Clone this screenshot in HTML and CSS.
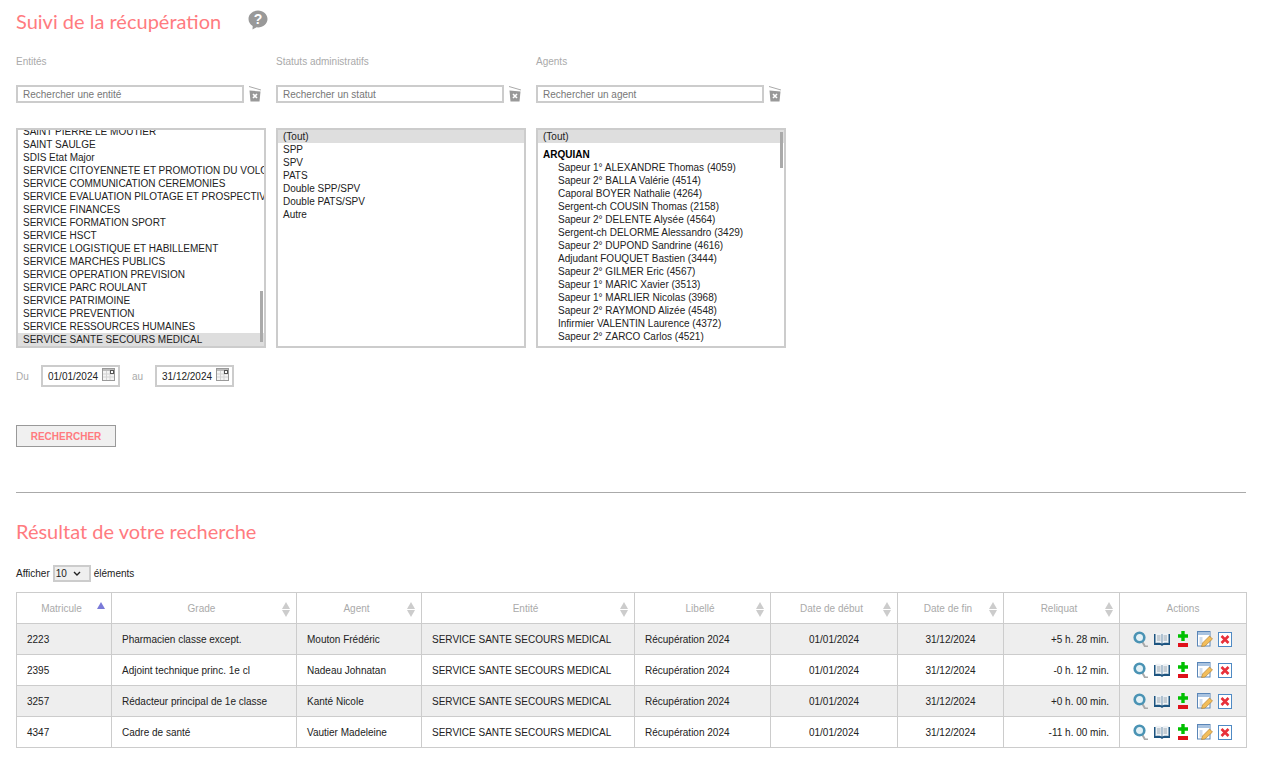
FILE: index.html
```html
<!DOCTYPE html>
<html lang="fr">
<head>
    <meta charset="UTF-8">
    <title>Suivi de la récupération</title>
    <link rel="stylesheet" href="styles.css">
</head>
<body>
    <svg class="sprites" width="0" height="0">
        <symbol id="i-trash" viewBox="0 0 14 18">
            <path d="M1 1.500 13 5" stroke="#aaa" stroke-width="1" fill="none"/>
            <path d="M1.500 5.500 12.500 6.500 11.500 16.500H2.500Z" fill="#999"/>
            <path d="M5 9 9 13M9 9 5 13" stroke="#fff" stroke-width="1.600"/>
        </symbol>
        <symbol id="i-cal" viewBox="0 0 13 13">
            <rect x=".5" y=".5" width="12" height="12" fill="#f4f4f4" stroke="#999"/>
            <rect x="1" y="1" width="11" height="2" fill="#bbb"/>
            <path d="M1 6H12M1 9H12M4.500 3V12M8 3V12" stroke="#d4d4d4"/>
            <rect x="8.500" y="2.500" width="3" height="3" fill="#fff" stroke="#555"/>
        </symbol>
        <symbol id="i-search" viewBox="0 0 16 16">
            <path d="M9.500 11 12 15.500H15" stroke="#aaa" stroke-width="2" fill="none"/>
            <circle cx="6.500" cy="6.500" r="4.800" fill="#e4f1f6" stroke="#4a93b4" stroke-width="2.600"/>
        </symbol>
        <symbol id="i-book" viewBox="0 0 16 14">
            <path d="M0 2H16V13H9.500L8 14 6.500 13H0Z" fill="#1d5480"/>
            <path d="M1.500 1C4 .5 6.500 .5 7.700 2V11.500C6.500 10.500 4 10.500 1.500 11ZM14.500 1C12 .5 9.500 .5 8.300 2V11.500C9.500 10.500 12 10.500 14.500 11Z" fill="#eef2f5"/>
            <path d="M3 4H6.500M3 6H6.500M3 8H6.500M9.500 4H13M9.500 6H13M9.500 8H13" stroke="#9aa7b2"/>
        </symbol>
        <symbol id="i-plus" viewBox="0 0 12 16">
            <path d="M6 0V10M1 5H11" stroke="#00c000" stroke-width="3.400"/>
            <rect x="1" y="12" width="10" height="4" fill="#e0101a"/>
        </symbol>
        <symbol id="i-edit" viewBox="0 0 16 16">
            <rect x=".5" y=".5" width="12.500" height="14.500" fill="#fff" stroke="#5a86b8"/>
            <rect x="1" y="1" width="11.500" height="3" fill="#a9c3e0"/>
            <rect x="2.500" y="6" width="3" height="7.500" fill="#cfdcec"/>
            <path d="M4.500 15.500 5.500 12 12.500 5 15.500 8 8 15Z" fill="#f2bd5a" stroke="#a9792c" stroke-width=".6"/>
        </symbol>
        <symbol id="i-del" viewBox="0 0 14 15">
            <rect x=".5" y=".5" width="13" height="14" fill="#fff" stroke="#4f8ac4"/>
            <path d="M3.500 4 10.500 11M10.500 4 3.500 11" stroke="#e8303a" stroke-width="2.600"/>
        </symbol>
    </svg>

    <div class="title-row">
        <h1>Suivi de la récupération</h1>
        <svg class="help" viewBox="0 0 20 20" width="20" height="20">
            <path d="M10 .5C4.700 .5 .5 4.200 .5 9C.5 12 2.200 14.500 4.700 16L4.500 19.500 8.500 17.300C14.500 18 19.500 14.200 19.500 9C19.500 4.200 15.300 .5 10 .5Z" fill="#999"/>
            <text x="10" y="14" text-anchor="middle" class="help-mark">?</text>
        </svg>
    </div>

    <div class="filters">
        <div class="filter">
            <label class="filter-label">Entités</label>
            <div class="search-row">
                <input class="search" placeholder="Rechercher une entité">
                <svg class="trash"><use href="#i-trash"/></svg>
            </div>
            <div class="listbox listbox-end">
                <div class="opt">SAINT PIERRE LE MOUTIER</div>
                <div class="opt">SAINT SAULGE</div>
                <div class="opt">SDIS Etat Major</div>
                <div class="opt">SERVICE CITOYENNETE ET PROMOTION DU VOLONTARIAT</div>
                <div class="opt">SERVICE COMMUNICATION CEREMONIES</div>
                <div class="opt">SERVICE EVALUATION PILOTAGE ET PROSPECTIVE</div>
                <div class="opt">SERVICE FINANCES</div>
                <div class="opt">SERVICE FORMATION SPORT</div>
                <div class="opt">SERVICE HSCT</div>
                <div class="opt">SERVICE LOGISTIQUE ET HABILLEMENT</div>
                <div class="opt">SERVICE MARCHES PUBLICS</div>
                <div class="opt">SERVICE OPERATION PREVISION</div>
                <div class="opt">SERVICE PARC ROULANT</div>
                <div class="opt">SERVICE PATRIMOINE</div>
                <div class="opt">SERVICE PREVENTION</div>
                <div class="opt">SERVICE RESSOURCES HUMAINES</div>
                <div class="opt selected">SERVICE SANTE SECOURS MEDICAL</div>
                <div class="thumb thumb-entites"></div>
            </div>
        </div>
        <div class="filter">
            <label class="filter-label">Statuts administratifs</label>
            <div class="search-row">
                <input class="search" placeholder="Rechercher un statut">
                <svg class="trash"><use href="#i-trash"/></svg>
            </div>
            <div class="listbox">
                <div class="opt selected">(Tout)</div>
                <div class="opt">SPP</div>
                <div class="opt">SPV</div>
                <div class="opt">PATS</div>
                <div class="opt">Double SPP/SPV</div>
                <div class="opt">Double PATS/SPV</div>
                <div class="opt">Autre</div>
            </div>
        </div>
        <div class="filter">
            <label class="filter-label">Agents</label>
            <div class="search-row">
                <input class="search" placeholder="Rechercher un agent">
                <svg class="trash"><use href="#i-trash"/></svg>
            </div>
            <div class="listbox">
                <div class="opt selected">(Tout)</div>
                <div class="opt group">ARQUIAN</div>
                <div class="opt sub">Sapeur 1° ALEXANDRE Thomas (4059)</div>
                <div class="opt sub">Sapeur 2° BALLA Valérie (4514)</div>
                <div class="opt sub">Caporal BOYER Nathalie (4264)</div>
                <div class="opt sub">Sergent-ch COUSIN Thomas (2158)</div>
                <div class="opt sub">Sapeur 2° DELENTE Alysée (4564)</div>
                <div class="opt sub">Sergent-ch DELORME Alessandro (3429)</div>
                <div class="opt sub">Sapeur 2° DUPOND Sandrine (4616)</div>
                <div class="opt sub">Adjudant FOUQUET Bastien (3444)</div>
                <div class="opt sub">Sapeur 2° GILMER Eric (4567)</div>
                <div class="opt sub">Sapeur 1° MARIC Xavier (3513)</div>
                <div class="opt sub">Sapeur 1° MARLIER Nicolas (3968)</div>
                <div class="opt sub">Sapeur 2° RAYMOND Alizée (4548)</div>
                <div class="opt sub">Infirmier VALENTIN Laurence (4372)</div>
                <div class="opt sub">Sapeur 2° ZARCO Carlos (4521)</div>
                <div class="thumb thumb-agents"></div>
            </div>
        </div>
    </div>

    <div class="dates">
        <span class="date-label">Du</span>
        <div class="date-box">01/01/2024<svg class="cal"><use href="#i-cal"/></svg></div>
        <span class="date-label date-label-to">au</span>
        <div class="date-box">31/12/2024<svg class="cal"><use href="#i-cal"/></svg></div>
    </div>

    <button class="search-btn">RECHERCHER</button>

    <hr class="sep">

    <h2>Résultat de votre recherche</h2>

    <div class="page-size">
        Afficher
        <div class="page-select">10
            <svg width="8" height="5" viewBox="0 0 8 5"><path d="M1 1 4 4 7 1" fill="none" stroke="#222" stroke-width="1.400"/></svg>
        </div>
        éléments
    </div>

    <table class="results">
        <colgroup>
            <col class="c-mat"><col class="c-grade"><col class="c-agent"><col class="c-entite"><col class="c-lib"><col class="c-deb"><col class="c-fin"><col class="c-rel"><col class="c-act">
        </colgroup>
        <thead>
            <tr>
                <th>Matricule<span class="sort sort-asc"></span></th>
                <th>Grade<span class="sort"></span></th>
                <th>Agent<span class="sort"></span></th>
                <th>Entité<span class="sort"></span></th>
                <th>Libellé<span class="sort"></span></th>
                <th>Date de début<span class="sort"></span></th>
                <th>Date de fin<span class="sort"></span></th>
                <th>Reliquat<span class="sort"></span></th>
                <th class="th-actions">Actions</th>
            </tr>
        </thead>
        <tbody>
            <tr>
                <td>2223</td><td>Pharmacien classe except.</td><td>Mouton Frédéric</td><td>SERVICE SANTE SECOURS MEDICAL</td><td>Récupération 2024</td>
                <td class="center">01/01/2024</td><td class="center">31/12/2024</td><td class="right">+5 h. 28 min.</td>
                <td class="actions"><svg class="a-search"><use href="#i-search"/></svg><svg class="a-book"><use href="#i-book"/></svg><svg class="a-plus"><use href="#i-plus"/></svg><svg class="a-edit"><use href="#i-edit"/></svg><svg class="a-del"><use href="#i-del"/></svg></td>
            </tr>
            <tr>
                <td>2395</td><td>Adjoint technique princ. 1e cl</td><td>Nadeau Johnatan</td><td>SERVICE SANTE SECOURS MEDICAL</td><td>Récupération 2024</td>
                <td class="center">01/01/2024</td><td class="center">31/12/2024</td><td class="right">-0 h. 12 min.</td>
                <td class="actions"><svg class="a-search"><use href="#i-search"/></svg><svg class="a-book"><use href="#i-book"/></svg><svg class="a-plus"><use href="#i-plus"/></svg><svg class="a-edit"><use href="#i-edit"/></svg><svg class="a-del"><use href="#i-del"/></svg></td>
            </tr>
            <tr>
                <td>3257</td><td>Rédacteur principal de 1e classe</td><td>Kanté Nicole</td><td>SERVICE SANTE SECOURS MEDICAL</td><td>Récupération 2024</td>
                <td class="center">01/01/2024</td><td class="center">31/12/2024</td><td class="right">+0 h. 00 min.</td>
                <td class="actions"><svg class="a-search"><use href="#i-search"/></svg><svg class="a-book"><use href="#i-book"/></svg><svg class="a-plus"><use href="#i-plus"/></svg><svg class="a-edit"><use href="#i-edit"/></svg><svg class="a-del"><use href="#i-del"/></svg></td>
            </tr>
            <tr>
                <td>4347</td><td>Cadre de santé</td><td>Vautier Madeleine</td><td>SERVICE SANTE SECOURS MEDICAL</td><td>Récupération 2024</td>
                <td class="center">01/01/2024</td><td class="center">31/12/2024</td><td class="right">-11 h. 00 min.</td>
                <td class="actions"><svg class="a-search"><use href="#i-search"/></svg><svg class="a-book"><use href="#i-book"/></svg><svg class="a-plus"><use href="#i-plus"/></svg><svg class="a-edit"><use href="#i-edit"/></svg><svg class="a-del"><use href="#i-del"/></svg></td>
            </tr>
        </tbody>
    </table>
</body>
</html>
```

FILE: styles.css
```css
* {
    box-sizing: border-box;
}

body {
    margin: 0;
    padding: 0 19px 0 16px;
    font-family: "Liberation Sans", Arial, sans-serif;
    font-size: 10px;
    color: #222;
    background: #fff;
}

.sprites {
    position: absolute;
}

h1, h2 {
    margin: 0;
    font-family: Lato, sans-serif;
    font-weight: 400;
    font-size: 20px;
    line-height: 26px;
    color: #ff7b7f;
}

.title-row {
    display: flex;
    align-items: flex-start;
    padding-top: 8px;
    height: 55px;
}

.help {
    margin-left: 27px;
    margin-top: 2px;
}

.help-mark {
    font-family: "Liberation Sans", sans-serif;
    font-weight: 700;
    font-size: 14px;
    fill: #fff;
}

.filters {
    display: flex;
    gap: 10px;
}

.filter {
    width: 250px;
}

.filter-label {
    display: block;
    height: 30px;
    line-height: 14px;
    color: #aaa;
}

.search-row {
    display: flex;
    height: 43px;
    align-items: flex-start;
}

.search {
    width: 228px;
    height: 18px;
    padding: 0 5px;
    border: 2px solid #ccc;
    font: inherit;
    outline: none;
}

.search::placeholder {
    color: #777;
    opacity: 1;
}

.trash {
    width: 14px;
    height: 18px;
    margin-left: 4px;
}

.listbox {
    position: relative;
    display: flex;
    flex-direction: column;
    width: 250px;
    height: 220px;
    border: 2px solid #ccc;
    overflow: hidden;
}

.listbox-end {
    justify-content: flex-end;
}

.opt {
    flex: none;
    height: 13px;
    line-height: 13px;
    padding: 0 5px;
    white-space: nowrap;
    color: #222;
}

.selected {
    background: #dedede;
}

.group {
    margin-top: 5px;
    font-weight: 700;
    color: #000;
}

.sub {
    padding-left: 20px;
}

.thumb {
    position: absolute;
    right: 1px;
    width: 3px;
    background: #aaa;
}

.thumb-entites {
    top: 161px;
    height: 51px;
}

.thumb-agents {
    top: 2px;
    height: 36px;
}

.dates {
    display: flex;
    align-items: center;
    margin-top: 17px;
    height: 22px;
}

.date-label {
    color: #aaa;
    width: 25px;
}

.date-label-to {
    width: 23px;
    margin-left: 12px;
}

.date-box {
    display: flex;
    justify-content: space-between;
    width: 79px;
    height: 22px;
    line-height: 20px;
    padding: 0 0 0 5px;
    border: 2px solid #ccc;
}

.cal {
    width: 13px;
    height: 13px;
    margin: 1px 3px 0 0;
}

.search-btn {
    display: block;
    margin-top: 38px;
    width: 100px;
    height: 22px;
    padding: 0;
    font: inherit;
    font-weight: 700;
    color: #ff7b7f;
    background: #f0f0f0;
    border: 1px solid #999;
}

.sep {
    margin: 45px 0 0;
    height: 1px;
    border: 0;
    background: #aaa;
}

h2 {
    margin-top: 25px;
}

.page-size {
    display: flex;
    align-items: center;
    gap: 3px;
    margin-top: 21px;
    height: 17px;
}

.page-select {
    display: flex;
    align-items: center;
    justify-content: space-between;
    width: 38px;
    height: 17px;
    padding: 0 8px 0 1px;
    background: #efefef;
    border: 2px solid #ccc;
}

.results {
    margin-top: 10px;
    width: 1230px;
    border-collapse: collapse;
    table-layout: fixed;
}

.c-mat { width: 95px; }
.c-grade { width: 185px; }
.c-agent { width: 125px; }
.c-entite { width: 213px; }
.c-lib { width: 136px; }
.c-deb { width: 127px; }
.c-fin { width: 106px; }
.c-rel { width: 116px; }
.c-act { width: 127px; }

.results th,
.results td {
    border: 1px solid #ccc;
    height: 31px;
    padding: 0 10px;
    white-space: nowrap;
}

.results th {
    position: relative;
    padding-right: 15px;
    font-weight: 400;
    color: #aaa;
    text-align: center;
}

.results .th-actions {
    padding: 0 10px;
}

.results tbody tr:nth-child(odd) {
    background: #eee;
}

.center {
    text-align: center;
}

.results .right {
    text-align: right;
}

.sort {
    position: absolute;
    right: 6px;
    top: 9px;
    width: 0;
    height: 0;
    border-left: 4.500px solid transparent;
    border-right: 4.500px solid transparent;
    border-bottom: 7px solid #ccc;
}

.sort::after {
    content: "";
    position: absolute;
    left: -4.500px;
    top: 8px;
    border-left: 4.500px solid transparent;
    border-right: 4.500px solid transparent;
    border-top: 7px solid #ccc;
}

.sort-asc {
    border-bottom-color: #7a7ad8;
}

.sort-asc::after {
    display: none;
}

.results .actions {
    padding: 0 0 0 13px;
}

.actions svg {
    vertical-align: middle;
}

.a-search { width: 16px; height: 16px; }
.a-book { width: 16px; height: 14px; margin-left: 5px; }
.a-plus { width: 12px; height: 16px; margin-left: 7px; }
.a-edit { width: 16px; height: 16px; margin-left: 8px; }
.a-del { width: 14px; height: 15px; margin-left: 5px; }
```
